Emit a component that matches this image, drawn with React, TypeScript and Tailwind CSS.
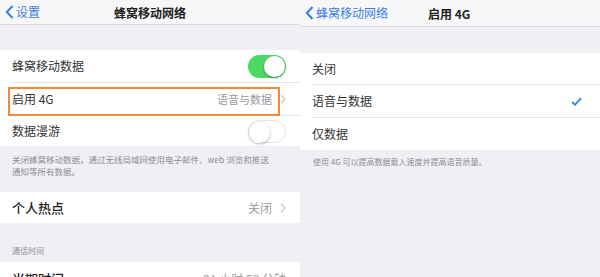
import React from "react";

const FONT = { fontFamily: '"Noto Sans CJK SC", "Noto Sans", sans-serif' };

function Toggle({ on }: { on: boolean }) {
  return (
    <span
      className={`relative inline-block h-[23px] w-[38px] rounded-full ${
        on ? "bg-[#4cd964]" : "border border-[#e3e3e6] bg-white"
      }`}
    >
      <span
        className={`absolute top-[1px] h-[21px] w-[21px] rounded-full bg-white shadow-[0_1px_3px_rgba(0,0,0,0.3)] ${
          on ? "right-[1px]" : "left-[0px] top-[0px]"
        }`}
      />
    </span>
  );
}

function Chevron() {
  return (
    <svg width="6" height="10" viewBox="0 0 6 10" className="ml-2" aria-hidden>
      <path d="M1 1l4 4-4 4" fill="none" stroke="#c7c7cc" strokeWidth="1.3" />
    </svg>
  );
}

function Back({ label }: { label: string }) {
  return (
    <span className="flex items-center gap-[2px] text-[12px] text-[#3a7ee6]">
      <svg width="9" height="14" viewBox="0 0 9 14" aria-hidden>
        <path d="M7.5 1L1.8 7l5.7 6" fill="none" stroke="#3a7ee6" strokeWidth="2" />
      </svg>
      {label}
    </span>
  );
}

function Row({
  label,
  right,
  divider = true,
  big = false,
  h = "h-[33px]",
  children,
}: {
  label: string;
  right?: React.ReactNode;
  divider?: boolean;
  big?: boolean;
  h?: string;
  children?: React.ReactNode;
}) {
  return (
    <div className={`relative flex ${h} shrink-0 items-stretch bg-white pl-[12px]`}>
      <div
        className={`flex flex-1 items-center justify-between pr-[14px] ${
          divider ? "border-b border-[#e5e5ea]" : ""
        }`}
      >
        <span className={big ? "text-[13px] font-medium text-[#222]" : "text-[12px] text-[#333]"}>{label}</span>
        {right}
      </div>
      {children}
    </div>
  );
}

function LeftPanel() {
  return (
    <div className="flex h-[277px] w-[300px] flex-col overflow-hidden bg-[#efeff4]">
      <div className="relative flex h-[25px] shrink-0 items-center border-b border-[#dcdce0] bg-[#f7f7f8] px-[5px]">
        <Back label="设置" />
        <span className="absolute left-0 right-0 top-[4px] text-center text-[12px] font-semibold text-[#222]">
          蜂窝移动网络
        </span>
      </div>
      <div className="h-[25px] shrink-0" />
      <Row label="蜂窝移动数据" right={<Toggle on />} />
      <Row
        label="启用 4G"
        right={
          <span className="flex items-center text-[11px] text-[#9a9aa0]">
            语音与数据
            <Chevron />
          </span>
        }
      >
        <span className="pointer-events-none absolute bottom-[0px] left-[8px] right-[20px] top-[4px] border-2 border-[#f08a3c]" />
      </Row>
      <Row label="数据漫游" divider={false} h="h-[30px]" right={<Toggle on={false} />} />
      <div className="h-[46px] shrink-0 pl-[12px] pr-[28px] pt-[7px] text-[8.5px] leading-[12px] text-[#8e8e93]">
        关闭蜂窝移动数据，通过无线局域网使用电子邮件、web 浏览和推送通知等所有数据。
      </div>
      <Row
        label="个人热点"
        big
        divider={false}
        h="h-[31px]"
        right={
          <span className="flex items-center text-[12px] text-[#9a9aa0]">
            关闭
            <Chevron />
          </span>
        }
      />
      <div className="flex h-[39px] shrink-0 items-end px-[12px] pb-[5px] text-[8px] text-[#8e8e93]">通话时间</div>
      <Row
        label="当期时间"
        big
        divider={false}
        right={<span className="text-[12px] text-[#9a9aa0]">21 小时 58 分钟</span>}
      />
    </div>
  );
}

function RightPanel() {
  return (
    <div className="flex h-[277px] w-[300px] flex-col overflow-hidden bg-[#efeff4]">
      <div className="relative flex h-[27px] shrink-0 items-center border-b border-[#dcdce0] bg-[#f7f7f8] px-[5px]">
        <Back label="蜂窝移动网络" />
        <span className="absolute left-[128px] top-[5px] text-[12px] font-semibold text-[#222]">启用 4G</span>
      </div>
      <div className="h-[26px] shrink-0" />
      <Row label="关闭" h="h-[32px]" />
      <Row
        label="语音与数据"
        right={
          <svg width="11" height="9" viewBox="0 0 11 9" className="mr-[4px]" aria-hidden>
            <path d="M1 4.8l3 3L10 1.2" fill="none" stroke="#3a7ee6" strokeWidth="1.8" />
          </svg>
        }
      />
      <Row label="仅数据" divider={false} h="h-[32px]" />
      <div className="px-[13px] pt-[6px] text-[8px] leading-[12px] text-[#8e8e93]">
        使用 4G 可以提高数据载入速度并提高语音质量。
      </div>
    </div>
  );
}

export default function App() {
  return (
    <div className="flex h-[277px] w-[600px] overflow-hidden bg-white" style={FONT}>
      <LeftPanel />
      <RightPanel />
    </div>
  );
}
